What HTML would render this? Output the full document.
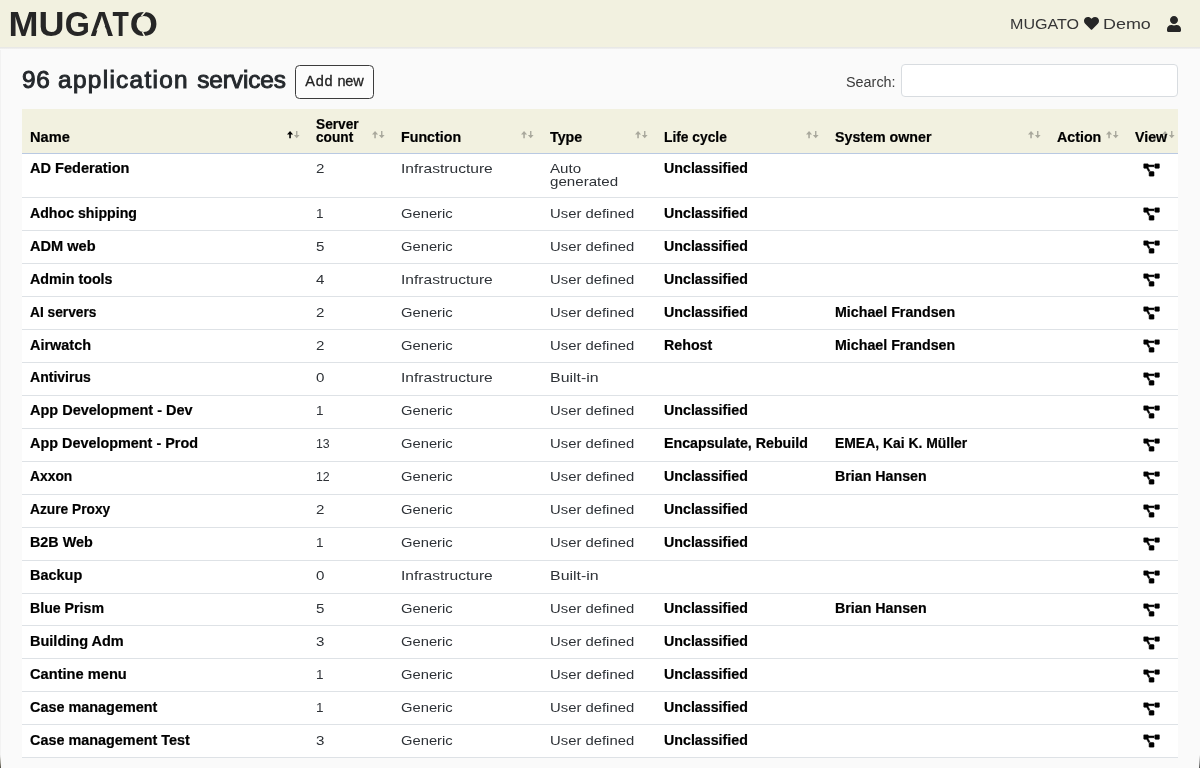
<!DOCTYPE html>
<html lang="en">
<head>
<meta charset="utf-8">
<title>MUGATO - Application services</title>
<style>
*{box-sizing:border-box}
html,body{margin:0;padding:0}
body{will-change:transform}
body{width:1200px;height:768px;overflow:hidden;background:#fafafa;color:#212529;font-family:"Liberation Sans",sans-serif;font-size:12.6px;position:relative}
.nav{position:absolute;left:0;top:0;width:1200px;height:50px;background:linear-gradient(to bottom,#f2f1e0 0,#f2f1e0 47.100px,#e8e8e6 47.400px,#ebebea 48.300px,#fafafa 49.200px)}
.logo{position:absolute;left:0;top:0}
.user{position:absolute;left:1010px;top:14px;width:180px;height:20px;font-size:15.4px;line-height:20px;color:#363636;white-space:nowrap}
.user span{position:absolute;left:0;top:0;display:block;transform-origin:0 50%;transform:scaleX(1.045)}
.user span.demo{left:93px;transform:scaleX(1.165)}
.heart{position:absolute;left:73.600px;top:2.100px;width:15px;height:14.700px;fill:#262626}
.uicon{position:absolute;left:1167px;top:15.500px;width:14px;height:16px;fill:#262626}
.title{position:absolute;left:21.500px;top:65px;margin:0;font-size:23px;line-height:30px;font-weight:normal;color:#24282c;-webkit-text-stroke:.9px #24282c;letter-spacing:.7px;white-space:nowrap;transform-origin:0 50%;transform:scaleX(1.06)}
.btn{position:absolute;left:294.600px;top:64.900px;width:79.300px;height:33.700px;border:1px solid #3c3c3c;border-radius:4.500px;background:#fcfcfc;font-size:14.500px;line-height:31.700px;letter-spacing:.4px;word-spacing:-.200px;text-align:center;color:#222;-webkit-text-stroke:.3px #222;padding-left:.200px}
.slabel{position:absolute;left:846.300px;top:73.100px;font-size:14px;line-height:18px;color:#3a3a3a;transform-origin:0 50%;transform:scaleX(1.028)}
.sinput{position:absolute;left:901.300px;top:64.200px;width:276.700px;height:33px;border:1px solid #d8dce0;border-radius:4px;background:#fff}
table{position:absolute;left:22px;top:109.200px;width:1156px;border-collapse:collapse;table-layout:fixed;background:#fff;line-height:13px;font-size:14.200px}
th{background:#f2f1e0;text-align:left;vertical-align:bottom;padding:0 8px 8.800px 8px;height:44.300px;border-bottom:1px solid #b9c9e2;font-weight:bold;color:#000;position:relative;white-space:nowrap}
td{vertical-align:top;padding:8.5px 8px 0 8px;height:32.94px;border-bottom:1px solid #dee2e6;white-space:nowrap;overflow:visible}
tr.tall td{height:44.3px}
td b,th b{display:inline-block;font-weight:bold;color:#000;-webkit-text-stroke:.2px #000;margin-left:-.4px;transform-origin:0 50%;transform:scaleX(1.003)}
td i{display:inline-block;font-style:normal;font-size:13.600px;color:#2e3237;margin-left:-.5px;transform-origin:0 50%;transform:scaleX(1.112)}
.pd{width:18px;height:15px;display:block;margin:.7px 0 0 8px;fill:#000;overflow:visible}
.sa{position:absolute;right:8.200px;top:22.100px;width:12.800px;height:7.400px;display:block}
th:last-child .sa{right:3.200px}
.sa .u,.sa .d{fill:#000;opacity:.3}
.sa.asc .u{opacity:1}
.cbl,.cbr{position:absolute;bottom:0;width:1px;height:13px}
.cbl{left:0;background:linear-gradient(to bottom,rgba(90,86,70,0),rgba(90,86,70,.55) 60%,rgba(60,56,44,.9))}
.cbr{right:0;background:linear-gradient(to bottom,rgba(80,80,80,0),rgba(80,80,80,.5) 60%,rgba(50,50,50,.85))}
.edge{position:absolute;left:0;top:50px;width:1px;height:706px;background:rgba(0,0,0,.03)}
</style>
</head>
<body>
<svg width="0" height="0" style="position:absolute"><defs><symbol id="pd" viewBox="0 0 640 512"><path stroke="#000" stroke-width="22" stroke-linejoin="round" d="M384 320H256c-17.670 0-32 14.330-32 32v128c0 17.670 14.330 32 32 32h128c17.670 0 32-14.330 32-32V352c0-17.670-14.330-32-32-32zM192 32c0-17.670-14.330-32-32-32H32C14.330 0 0 14.330 0 32v128c0 17.670 14.330 32 32 32h95.720l73.160 128.040C211.980 300.980 232.400 288 256 288h.280L192 175.510V128h224V64H192V32zM608 0H480c-17.670 0-32 14.330-32 32v128c0 17.670 14.330 32 32 32h128c17.670 0 32-14.330 32-32V32c0-17.670-14.330-32-32-32z"/></symbol></defs></svg>
<div class="nav">
<svg class="logo" width="170" height="48" viewBox="0 0 170 48"><text y="35.7" font-family="Liberation Sans, sans-serif" font-size="35.6" font-weight="bold" fill="#262626"><tspan x="8.5" textLength="30" lengthAdjust="spacingAndGlyphs">M</tspan><tspan x="38.4" textLength="26" lengthAdjust="spacingAndGlyphs">U</tspan><tspan x="64.8" textLength="25.2" lengthAdjust="spacingAndGlyphs">G</tspan><tspan x="89.9" textLength="23.8" lengthAdjust="spacingAndGlyphs">A</tspan><tspan x="112.6" textLength="16.3" lengthAdjust="spacingAndGlyphs">T</tspan><tspan x="129.8" textLength="28.2" lengthAdjust="spacingAndGlyphs">O</tspan></text>
<polygon points="96.300,30.500 106.700,30.500 101.500,19" fill="#f2f1e0"/>
<path d="M147 9.500 L141.500 16 M142.500 32 L146 39" stroke="#f2f1e0" stroke-width="1.600" fill="none"/></svg>
<div class="user"><span>MUGATO</span><svg class="heart" viewBox="0 0 512 512" preserveAspectRatio="none"><path d="M462.300 62.600C407.500 15.900 326 24.300 275.700 76.200L256 96.500l-19.700-20.300C186.100 24.300 104.500 15.900 49.700 62.600c-62.800 53.600-66.100 149.800-9.900 207.900l193.500 199.800c12.500 12.900 32.800 12.900 45.300 0l193.500-199.800c56.300-58.100 53-154.300-9.800-207.900z"/></svg><span class="demo">Demo</span></div>
<svg class="uicon" viewBox="0 0 448 512"><path d="M224 256c70.700 0 128-57.300 128-128S294.700 0 224 0 96 57.300 96 128s57.300 128 128 128zm89.600 32h-16.700c-22.200 10.200-46.900 16-72.900 16s-50.600-5.800-72.900-16h-16.700C60.200 288 0 348.200 0 422.400V464c0 26.500 21.500 48 48 48h352c26.500 0 48-21.500 48-48v-41.600c0-74.200-60.200-134.400-134.400-134.400z"/></svg>
</div>
<h1 class="title">96 <span style="letter-spacing:1.22px">application</span> <span style="letter-spacing:-.1px;margin-left:.8px">services</span></h1>
<div class="btn"><span style="letter-spacing:.75px">Add</span> <span style="letter-spacing:-.25px">new</span></div>
<div class="slabel">Search:</div>
<div class="sinput"></div>
<table>
<colgroup><col style="width:286px"><col style="width:85px"><col style="width:149px"><col style="width:114px"><col style="width:171px"><col style="width:222px"><col style="width:78px"><col style="width:51px"></colgroup>
<thead><tr>
<th><b style="transform:scaleX(1.03)">Name</b><svg class="sa asc" viewBox="0 0 13 7.4"><path class="u" d="M3.100 0 L6.200 3.500 L3.900 3.500 L3.900 7.400 L2.300 7.400 L2.300 3.500 L0 3.500 Z"/><path class="d" d="M9.900 7.400 L12.800 4 L10.600 4 L10.600 0 L9.200 0 L9.200 4 L7 4 Z"/></svg></th>
<th><b style="transform:scaleX(.966)">Server<br>count</b><svg class="sa" viewBox="0 0 13 7.4"><path class="u" d="M3.100 0 L6.200 3.500 L3.900 3.500 L3.900 7.400 L2.300 7.400 L2.300 3.500 L0 3.500 Z"/><path class="d" d="M9.900 7.400 L12.800 4 L10.600 4 L10.600 0 L9.200 0 L9.200 4 L7 4 Z"/></svg></th>
<th><b>Function</b><svg class="sa" viewBox="0 0 13 7.4"><path class="u" d="M3.100 0 L6.200 3.500 L3.900 3.500 L3.900 7.400 L2.300 7.400 L2.300 3.500 L0 3.500 Z"/><path class="d" d="M9.900 7.400 L12.800 4 L10.600 4 L10.600 0 L9.200 0 L9.200 4 L7 4 Z"/></svg></th>
<th><b>Type</b><svg class="sa" viewBox="0 0 13 7.4"><path class="u" d="M3.100 0 L6.200 3.500 L3.900 3.500 L3.900 7.400 L2.300 7.400 L2.300 3.500 L0 3.500 Z"/><path class="d" d="M9.900 7.400 L12.800 4 L10.600 4 L10.600 0 L9.200 0 L9.200 4 L7 4 Z"/></svg></th>
<th><b style="transform:scaleX(0.9721)">Life cycle</b><svg class="sa" viewBox="0 0 13 7.4"><path class="u" d="M3.100 0 L6.200 3.500 L3.900 3.500 L3.900 7.400 L2.300 7.400 L2.300 3.500 L0 3.500 Z"/><path class="d" d="M9.900 7.400 L12.800 4 L10.600 4 L10.600 0 L9.200 0 L9.200 4 L7 4 Z"/></svg></th>
<th><b>System owner</b><svg class="sa" viewBox="0 0 13 7.4"><path class="u" d="M3.100 0 L6.200 3.500 L3.900 3.500 L3.900 7.400 L2.300 7.400 L2.300 3.500 L0 3.500 Z"/><path class="d" d="M9.900 7.400 L12.800 4 L10.600 4 L10.600 0 L9.200 0 L9.200 4 L7 4 Z"/></svg></th>
<th><b>Action</b><svg class="sa" viewBox="0 0 13 7.4"><path class="u" d="M3.100 0 L6.200 3.500 L3.900 3.500 L3.900 7.400 L2.300 7.400 L2.300 3.500 L0 3.500 Z"/><path class="d" d="M9.900 7.400 L12.800 4 L10.600 4 L10.600 0 L9.200 0 L9.200 4 L7 4 Z"/></svg></th>
<th><b>View</b><svg class="sa" viewBox="0 0 13 7.4"><path class="u" d="M3.100 0 L6.200 3.500 L3.900 3.500 L3.900 7.400 L2.300 7.400 L2.300 3.500 L0 3.500 Z"/><path class="d" d="M9.900 7.400 L12.800 4 L10.600 4 L10.600 0 L9.200 0 L9.200 4 L7 4 Z"/></svg></th>
</tr></thead>
<tbody>
<tr class="tall"><td><b style="transform:scaleX(1.026)">AD Federation</b></td><td><i>2</i></td><td><i style="transform:scaleX(1.146)">Infrastructure</i></td><td><i>Auto<br>generated</i></td><td><b>Unclassified</b></td><td></td><td></td><td><svg class="pd" viewBox="-16 -16 706.800 589"><use href="#pd" width="640" height="512"/></svg></td></tr>
<tr><td><b style="transform:scaleX(0.998)">Adhoc shipping</b></td><td><i style="transform:scaleX(0.9919)">1</i></td><td><i style="transform:scaleX(1.085)">Generic</i></td><td><i style="transform:scaleX(1.092)">User defined</i></td><td><b>Unclassified</b></td><td></td><td></td><td><svg class="pd" viewBox="-16 -16 706.800 589"><use href="#pd" width="640" height="512"/></svg></td></tr>
<tr><td><b style="transform:scaleX(1.027)">ADM web</b></td><td><i>5</i></td><td><i style="transform:scaleX(1.085)">Generic</i></td><td><i style="transform:scaleX(1.092)">User defined</i></td><td><b>Unclassified</b></td><td></td><td></td><td><svg class="pd" viewBox="-16 -16 706.800 589"><use href="#pd" width="640" height="512"/></svg></td></tr>
<tr><td><b style="transform:scaleX(1.007)">Admin tools</b></td><td><i>4</i></td><td><i style="transform:scaleX(1.146)">Infrastructure</i></td><td><i style="transform:scaleX(1.092)">User defined</i></td><td><b>Unclassified</b></td><td></td><td></td><td><svg class="pd" viewBox="-16 -16 706.800 589"><use href="#pd" width="640" height="512"/></svg></td></tr>
<tr><td><b style="transform:scaleX(0.9683)">AI servers</b></td><td><i>2</i></td><td><i style="transform:scaleX(1.085)">Generic</i></td><td><i style="transform:scaleX(1.092)">User defined</i></td><td><b>Unclassified</b></td><td><b>Michael Frandsen</b></td><td></td><td><svg class="pd" viewBox="-16 -16 706.800 589"><use href="#pd" width="640" height="512"/></svg></td></tr>
<tr><td><b style="transform:scaleX(1.018)">Airwatch</b></td><td><i>2</i></td><td><i style="transform:scaleX(1.085)">Generic</i></td><td><i style="transform:scaleX(1.092)">User defined</i></td><td><b>Rehost</b></td><td><b>Michael Frandsen</b></td><td></td><td><svg class="pd" viewBox="-16 -16 706.800 589"><use href="#pd" width="640" height="512"/></svg></td></tr>
<tr><td><b style="transform:scaleX(0.9894)">Antivirus</b></td><td><i>0</i></td><td><i style="transform:scaleX(1.146)">Infrastructure</i></td><td><i style="transform:scaleX(1.172)">Built-in</i></td><td></td><td></td><td></td><td><svg class="pd" viewBox="-16 -16 706.800 589"><use href="#pd" width="640" height="512"/></svg></td></tr>
<tr><td><b style="transform:scaleX(1.021)">App Development - Dev</b></td><td><i style="transform:scaleX(0.9919)">1</i></td><td><i style="transform:scaleX(1.085)">Generic</i></td><td><i style="transform:scaleX(1.092)">User defined</i></td><td><b>Unclassified</b></td><td></td><td></td><td><svg class="pd" viewBox="-16 -16 706.800 589"><use href="#pd" width="640" height="512"/></svg></td></tr>
<tr><td><b style="transform:scaleX(1.015)">App Development - Prod</b></td><td><i style="transform:scaleX(0.9084)">13</i></td><td><i style="transform:scaleX(1.085)">Generic</i></td><td><i style="transform:scaleX(1.092)">User defined</i></td><td><b>Encapsulate, Rebuild</b></td><td><b style="transform:scaleX(0.9807)">EMEA, Kai K. Müller</b></td><td></td><td><svg class="pd" viewBox="-16 -16 706.800 589"><use href="#pd" width="640" height="512"/></svg></td></tr>
<tr><td><b style="transform:scaleX(0.975)">Axxon</b></td><td><i style="transform:scaleX(0.9084)">12</i></td><td><i style="transform:scaleX(1.085)">Generic</i></td><td><i style="transform:scaleX(1.092)">User defined</i></td><td><b>Unclassified</b></td><td><b>Brian Hansen</b></td><td></td><td><svg class="pd" viewBox="-16 -16 706.800 589"><use href="#pd" width="640" height="512"/></svg></td></tr>
<tr><td><b style="transform:scaleX(0.9692)">Azure Proxy</b></td><td><i>2</i></td><td><i style="transform:scaleX(1.085)">Generic</i></td><td><i style="transform:scaleX(1.092)">User defined</i></td><td><b>Unclassified</b></td><td></td><td></td><td><svg class="pd" viewBox="-16 -16 706.800 589"><use href="#pd" width="640" height="512"/></svg></td></tr>
<tr><td><b style="transform:scaleX(1.011)">B2B Web</b></td><td><i style="transform:scaleX(0.9919)">1</i></td><td><i style="transform:scaleX(1.085)">Generic</i></td><td><i style="transform:scaleX(1.092)">User defined</i></td><td><b>Unclassified</b></td><td></td><td></td><td><svg class="pd" viewBox="-16 -16 706.800 589"><use href="#pd" width="640" height="512"/></svg></td></tr>
<tr><td><b style="transform:scaleX(1.02)">Backup</b></td><td><i>0</i></td><td><i style="transform:scaleX(1.146)">Infrastructure</i></td><td><i style="transform:scaleX(1.172)">Built-in</i></td><td></td><td></td><td></td><td><svg class="pd" viewBox="-16 -16 706.800 589"><use href="#pd" width="640" height="512"/></svg></td></tr>
<tr><td><b style="transform:scaleX(0.998)">Blue Prism</b></td><td><i>5</i></td><td><i style="transform:scaleX(1.085)">Generic</i></td><td><i style="transform:scaleX(1.092)">User defined</i></td><td><b>Unclassified</b></td><td><b>Brian Hansen</b></td><td></td><td><svg class="pd" viewBox="-16 -16 706.800 589"><use href="#pd" width="640" height="512"/></svg></td></tr>
<tr><td><b style="transform:scaleX(1.022)">Building Adm</b></td><td><i>3</i></td><td><i style="transform:scaleX(1.085)">Generic</i></td><td><i style="transform:scaleX(1.092)">User defined</i></td><td><b>Unclassified</b></td><td></td><td></td><td><svg class="pd" viewBox="-16 -16 706.800 589"><use href="#pd" width="640" height="512"/></svg></td></tr>
<tr><td><b style="transform:scaleX(1.032)">Cantine menu</b></td><td><i style="transform:scaleX(0.9919)">1</i></td><td><i style="transform:scaleX(1.085)">Generic</i></td><td><i style="transform:scaleX(1.092)">User defined</i></td><td><b>Unclassified</b></td><td></td><td></td><td><svg class="pd" viewBox="-16 -16 706.800 589"><use href="#pd" width="640" height="512"/></svg></td></tr>
<tr><td><b style="transform:scaleX(1.016)">Case management</b></td><td><i style="transform:scaleX(0.9919)">1</i></td><td><i style="transform:scaleX(1.085)">Generic</i></td><td><i style="transform:scaleX(1.092)">User defined</i></td><td><b>Unclassified</b></td><td></td><td></td><td><svg class="pd" viewBox="-16 -16 706.800 589"><use href="#pd" width="640" height="512"/></svg></td></tr>
<tr><td><b style="transform:scaleX(1.015)">Case management Test</b></td><td><i>3</i></td><td><i style="transform:scaleX(1.085)">Generic</i></td><td><i style="transform:scaleX(1.092)">User defined</i></td><td><b>Unclassified</b></td><td></td><td></td><td><svg class="pd" viewBox="-16 -16 706.800 589"><use href="#pd" width="640" height="512"/></svg></td></tr>
</tbody>
</table>
<div class="edge"></div><div class="cbl"></div><div class="cbr"></div>
</body>
</html>
